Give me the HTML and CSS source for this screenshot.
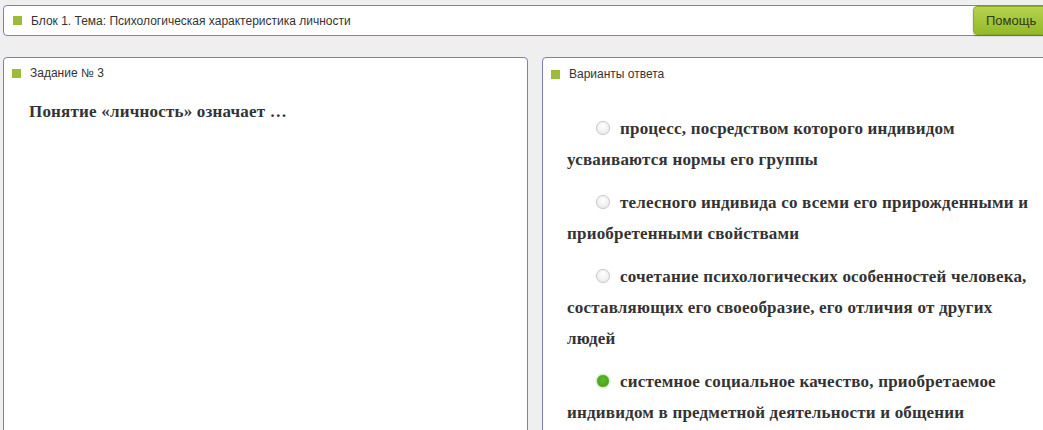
FILE: index.html
```html
<!DOCTYPE html>
<html lang="ru">
<head>
  <meta charset="UTF-8" />
  <title>Тестирование</title>
  <link rel="stylesheet" href="styles.css">
</head>
<body>
  <div class="page">
    <div class="topbar">
      <span class="mark"></span>
      <span class="topbar-title">Блок 1. Тема: Психологическая характеристика личности</span>
      <button class="help">Помощь</button>
    </div>

    <div class="panels">
      <div class="panel">
        <div class="panel-head"><span class="mark"></span>Задание № 3</div>
        <p class="question">Понятие «личность» означает …</p>
      </div>

      <div class="panel answers">
        <div class="panel-head"><span class="mark"></span>Варианты ответа</div>
        <p class="option"><span class="radio"></span>процесс, посредством которого индивидом усваиваются нормы его группы</p>
        <p class="option"><span class="radio"></span>телесного индивида со всеми его прирожденными и приобретенными свойствами</p>
        <p class="option"><span class="radio"></span>сочетание психологических особенностей человека, составляющих его своеобразие, его отличия от других людей</p>
        <p class="option"><span class="radio checked"></span>системное социальное качество, приобретаемое индивидом в предметной деятельности и общении</p>
      </div>
    </div>
  </div>
</body>
</html>
```

FILE: styles.css
```css
body {
  margin: 0;
  background-color: #efefef;
  font-family: 'Liberation Sans', Arial, sans-serif;
  color: #333;
  overflow: hidden;
}

.page {
  width: 1064px;
  padding: 5px 0 0 3px;
}

.mark {
  display: inline-block;
  width: 9px;
  height: 9px;
  background-color: #9dbb3a;
  margin-right: 9px;
}

.topbar {
  display: flex;
  align-items: center;
  height: 29px;
  background-color: #fff;
  border: 1px solid #7c80b6;
  border-radius: 4px;
  padding-left: 9px;
}

.topbar-title {
  font-size: 12px;
  flex: 1;
}

.help {
  align-self: stretch;
  margin: 0 -1px 0 0;
  width: 94px;
  padding: 0 0 0 12px;
  text-align: left;
  border: 1px solid #8eab2a;
  border-radius: 4px;
  background: linear-gradient(#b6d24e, #93b929);
  font-family: 'Liberation Sans', Arial, sans-serif;
  font-size: 13px;
  color: #2f3a14;
  box-shadow: 0 1px 2px rgba(0, 0, 0, 0.25);
}

.panels {
  display: flex;
  gap: 14px;
  margin-top: 21px;
}

.panel {
  width: 523px;
  height: 400px;
  background-color: #fff;
  border: 1px solid #7c80b6;
  border-radius: 4px;
  flex-shrink: 0;
}

.panel-head {
  display: flex;
  align-items: center;
  font-size: 12px;
  padding: 8px 0 0 8px;
}

.question {
  font-family: 'Liberation Serif', 'Times New Roman', serif;
  font-weight: bold;
  font-size: 17px;
  letter-spacing: 0.2px;
  margin: 22px 0 0 25px;
}

.answers .panel-head {
  padding-top: 9px;
}

.option {
  font-family: 'Liberation Serif', 'Times New Roman', serif;
  font-weight: bold;
  font-size: 17px;
  letter-spacing: 0.2px;
  line-height: 31px;
  margin: 0 22px 12px 24px;
  text-indent: 29px;
}

.answers .option:first-of-type {
  margin-top: 32px;
}

.radio {
  display: inline-block;
  width: 12px;
  height: 12px;
  border-radius: 50%;
  border: 1px solid #c9c9c9;
  background: radial-gradient(circle at 50% 35%, #ffffff, #e6e6e6);
  vertical-align: -1px;
  margin-right: 10px;
  text-indent: 0;
  box-shadow: 0 0 1px rgba(0, 0, 0, 0.15);
}

.radio.checked {
  border-color: #d8e8c8;
  background: radial-gradient(circle at 50% 40%, #5dbb2a, #3f9a16);
  box-shadow: 0 0 0 1px #eef5e6;
}
```
